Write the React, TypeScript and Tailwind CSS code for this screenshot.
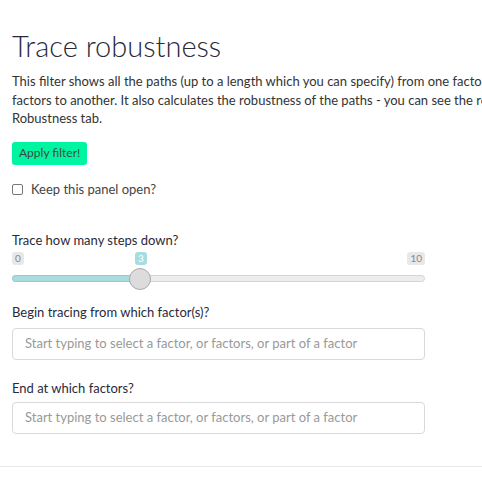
import React from 'react';

const font = { fontFamily: 'Lato, "Noto Sans", sans-serif' };

function RangeSlider() {
  // value 3 of 0..10
  return (
    <div className="relative w-[413px] h-[40px] mt-[3px]">
      <div className="flex justify-between">
        <span className="bg-[#e8e8e8] text-[#888] text-[10px] leading-[13px] px-[3px] rounded-[3px]">0</span>
        <span className="bg-[#e8e8e8] text-[#888] text-[10px] leading-[13px] px-[3px] rounded-[3px]">10</span>
      </div>
      {/* value badge */}
      <span className="absolute left-[123px] top-0 bg-[#a7dde0] text-white text-[10px] leading-[13px] px-[3px] rounded-[3px]">3</span>
      <div className="mt-[10px] h-[7px] rounded-full bg-[#ededed] border border-[#d4d4d4] relative">
        <div className="absolute left-[-1px] top-[-1px] h-[7px] w-[128px] rounded-l-full bg-[#a9dcdf] border border-[#8fcbd0]" />
      </div>
      {/* thumb */}
      <div className="absolute left-[117px] top-[16px] w-[22px] h-[22px] rounded-full bg-[#dcdcdc] border border-[#aaa]" />
    </div>
  );
}

function FactorInput() {
  return (
    <div className="w-[413px] h-[32px] border border-[#d9d9d9] rounded-[4px] flex items-center px-[12px] text-[13px] text-[#999]">
      Start typing to select a factor, or factors, or part of a factor
    </div>
  );
}

export default function App() {
  return (
    <div className="w-[482px] h-[492px] overflow-hidden bg-white text-[#333]" style={font}>
      <div className="w-[600px] px-[12px] pt-[28px]">
        <h2 className="text-[29px] leading-[36px] font-light text-[#2a2a3a]">Trace robustness</h2>
        <p className="mt-[8px] text-[13px] leading-[18.5px] whitespace-nowrap text-[#333]">
          This filter shows all the paths (up to a length which you can specify) from one factor or set of
          <br />
          factors to another. It also calculates the robustness of the paths - you can see the results in the
          <br />
          Robustness tab.
        </p>
        <button className="mt-[14px] h-[23px] px-[7px] rounded-[3px] bg-[#00f5a0] text-[12px] text-[#3c4a44]">
          Apply filter!
        </button>
        <label className="mt-[15px] flex items-center gap-[8px] text-[13px] text-[#444]">
          <span className="w-[11px] h-[11px] border border-[#777] rounded-[2px] bg-white" />
          Keep this panel open?
        </label>

        <div className="mt-[32px] text-[13px] text-[#2a2a3a] leading-[18px]">Trace how many steps down?</div>
        <RangeSlider />

        <div className="mt-[11px] text-[13px] text-[#2a2a3a] leading-[18px]">Begin tracing from which factor(s)?</div>
        <div className="mt-[7px]"><FactorInput /></div>

        <div className="mt-[19px] text-[13px] text-[#2a2a3a] leading-[18px]">End at which factors?</div>
        <div className="mt-[5px]"><FactorInput /></div>
      </div>
      <div className="mt-[32px] h-px bg-[#e8e8e8] w-full" />
    </div>
  );
}
